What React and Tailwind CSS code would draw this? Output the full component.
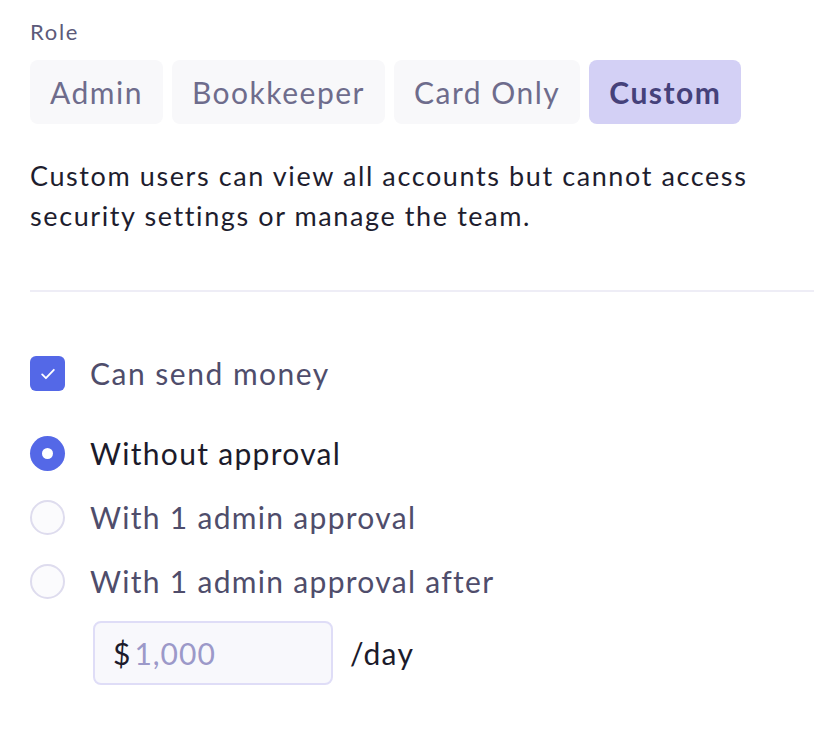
import { useState } from "react";

const roles = ["Admin", "Bookkeeper", "Card Only", "Custom"];

const options = [
  "Without approval",
  "With 1 admin approval",
  "With 1 admin approval after",
];

export default function App() {
  const [role, setRole] = useState("Custom");
  const [canSend, setCanSend] = useState(true);
  const [approval, setApproval] = useState(0);

  return (
    <div className="min-h-screen bg-white pl-[30px] pt-[18px] font-['Lato',sans-serif]">
      {/* ROLE */}
      <p className="text-[22px] leading-[28px] tracking-[1.7px] text-[#5c5a7a]">Role</p>
      <div className="mt-[14px] flex gap-[9px]">
        {roles.map((r) => (
          <button
            key={r}
            onClick={() => setRole(r)}
            className={
              r === role
                ? "h-[64px] px-[20px] rounded-[8px] bg-[#d3d0f5] text-[30px] font-bold tracking-[1.5px] text-[#45417a]"
                : "h-[64px] px-[20px] rounded-[8px] bg-[#f8f8fa] text-[30px] tracking-[1.5px] text-[#6e6c8c]"
            }
          >
            {r}
          </button>
        ))}
      </div>

      <p className="mt-[32px] w-[760px] text-[27px] leading-[40px] tracking-[1.6px] text-[#1e1d2e]">
        Custom users can view all accounts but cannot access security settings or manage the team.
      </p>

      <div className="mt-[54px] h-[2px] bg-[#eeedf6]" />

      {/* PERMISSIONS */}
      <label className="mt-[59px] flex items-center gap-[25px] cursor-pointer">
        <span
          onClick={() => setCanSend(!canSend)}
          className={
            canSend
              ? "w-[35px] h-[35px] rounded-[6px] bg-[#5468e7] flex items-center justify-center"
              : "w-[35px] h-[35px] rounded-[6px] border-2 border-[#dcdbec] bg-[#fbfbfd]"
          }
        >
          {canSend && (
            <svg className="w-[20px] h-[20px]" fill="none" stroke="white" strokeWidth={2.2} viewBox="0 0 24 24">
              <path strokeLinecap="round" strokeLinejoin="round" d="M5 12.5l4.5 4.5L19 7" />
            </svg>
          )}
        </span>
        <span className="text-[30px] tracking-[1.5px] text-[#4f4d6b]">Can send money</span>
      </label>

      <div className="mt-[40px] flex flex-col gap-[29px]">
        {options.map((o, i) => (
          <label key={o} onClick={() => setApproval(i)} className="flex items-center gap-[25px] cursor-pointer h-[35px]">
            {approval === i ? (
              <span className="w-[35px] h-[35px] rounded-full bg-[#5468e7] flex items-center justify-center">
                <span className="w-[11px] h-[11px] rounded-full bg-white" />
              </span>
            ) : (
              <span className="w-[35px] h-[35px] rounded-full border-2 border-[#dedcee] bg-[#fbfbfd]" />
            )}
            <span
              className={
                approval === i
                  ? "text-[30px] tracking-[1.3px] text-[#1c1b2b]"
                  : "text-[30px] tracking-[1.3px] text-[#4f4d6b]"
              }
            >
              {o}
            </span>
          </label>
        ))}
      </div>

      <div className="mt-[22px] ml-[63px] flex items-center gap-[17px]">
        <div className="w-[240px] h-[64px] rounded-[8px] border-2 border-[#dfddf7] bg-[#f8f8fc] flex items-center px-[18px] text-[30px]">
          <span className="text-[#1c1b2b]">$</span>
          <span className="ml-[4px] tracking-[1px] text-[#9c99c9]">1,000</span>
        </div>
        <span className="text-[30px] text-[#1c1b2b] tracking-[1.3px]">/day</span>
      </div>
    </div>
  );
}
